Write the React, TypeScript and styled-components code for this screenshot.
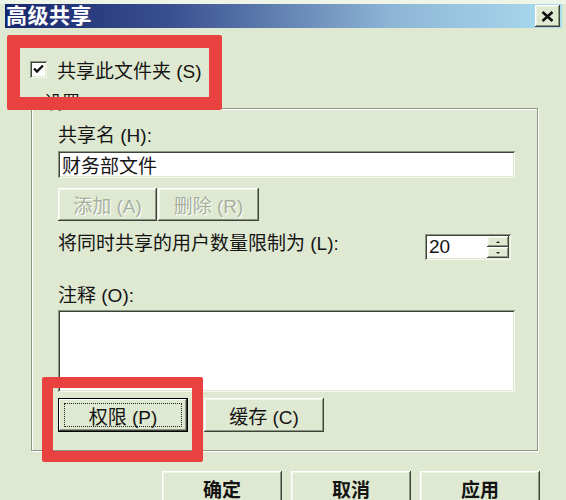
import React from "react";
import styled, { createGlobalStyle, css } from "styled-components";

const GlobalStyle = createGlobalStyle`
  html, body { margin: 0; padding: 0; background: #dfe9d1; }
  body { font-family: "Liberation Sans", "Noto Sans CJK SC", sans-serif; color: #141414; }
  * { box-sizing: border-box; }
`;

const FACE = `"Liberation Sans", "Noto Sans CJK SC", sans-serif`;

const Window = styled.div`
  position: relative;
  width: 566px;
  height: 500px;
  overflow: hidden;
  background: #dfe9d1;
  padding: 4px 4px 0 5px;
  display: flex;
  flex-direction: column;
  box-shadow: inset 0 4px 0 #eef4e6;
`;

const TitleBar = styled.div`
  height: 28px;
  display: flex;
  align-items: center;
  justify-content: space-between;
  padding: 0 2px 0 1px;
  background: linear-gradient(to right, #17266c 0%, #3a5090 30%, #8eb6d6 70%, #aadcee 100%);
`;

const TitleText = styled.span`
  font-family: ${FACE};
  font-weight: 700;
  font-size: 21px;
  line-height: 24px;
  color: #fff;
  letter-spacing: 0.5px;
`;

const raised = css`
  background: #dfe9d1;
  border: none;
  box-shadow:
    inset -1px -1px 0 #3e4438,
    inset 1px 1px 0 #ffffff,
    inset -2px -2px 0 #8c9684,
    inset 2px 2px 0 #eef4e6;
`;

const sunken = css`
  background: #ffffff;
  border: none;
  box-shadow:
    inset 1px 1px 0 #8c9684,
    inset -1px -1px 0 #f4f8ee,
    inset 2px 2px 0 #3e4438,
    inset -2px -2px 0 #dfe9d1;
`;

const CloseButton = styled.div`
  ${raised};
  width: 25px;
  height: 22px;
  display: flex;
  align-items: center;
  justify-content: center;
`;

const Body = styled.div`
  display: flex;
  flex-direction: column;
  padding: 0 24px 0 25px;
`;

const CheckRow = styled.label`
  margin-top: 30px;
  height: 22px;
  display: flex;
  align-items: center;
  gap: 10px;
  font-family: ${FACE};
  font-size: 19px;
`;

const CheckBox = styled.span`
  ${sunken};
  width: 17px;
  height: 17px;
  display: flex;
  align-items: center;
  justify-content: center;
`;

const Group = styled.fieldset`
  margin: 18px 0 0 1px;
  padding: 0 22px 18px 26px;
  border: 1px solid #8c9684;
  box-shadow: inset 1px 1px 0 #ffffff, 1px 1px 0 #ffffff;
  min-width: 0;
  display: flex;
  flex-direction: column;
`;

const Legend = styled.legend`
  margin-left: -17px;
  padding: 0 3px;
  font-family: ${FACE};
  font-size: 18px;
  line-height: 20px;
`;

const LegendText = styled.span`
  display: inline-block;
  transform: translateY(-5px);
`;

const Label = styled.div<{ $top: number }>`
  margin-top: ${(p) => p.$top}px;
  font-family: ${FACE};
  font-size: 19px;
  line-height: 20px;
  white-space: nowrap;
`;

const TextField = styled.div`
  ${sunken};
  margin-top: 5px;
  height: 27px;
  padding: 0 4px;
  display: flex;
  align-items: center;
  font-family: ${FACE};
  font-size: 19px;
`;

const Row = styled.div<{ $top: number; $gap: number }>`
  margin-top: ${(p) => p.$top}px;
  display: flex;
  align-items: center;
  gap: ${(p) => p.$gap}px;
`;

const Button = styled.div<{
  $w: number;
  $h: number;
  $disabled?: boolean;
  $default?: boolean;
  $bold?: boolean;
}>`
  ${raised};
  position: relative;
  width: ${(p) => p.$w}px;
  height: ${(p) => p.$h}px;
  flex: none;
  display: flex;
  align-items: center;
  justify-content: center;
  font-family: ${FACE};
  font-size: 19px;
  font-weight: ${(p) => (p.$bold ? 700 : 400)};
  color: ${(p) => (p.$disabled ? "#a7b09d" : "#141414")};
  text-shadow: ${(p) => (p.$disabled ? "1px 1px 0 #ffffff" : "none")};
  ${(p) =>
    p.$default &&
    css`
      box-shadow:
        inset 0 0 0 1px #000,
        inset -2px -2px 0 #3e4438,
        inset 2px 2px 0 #ffffff,
        inset -3px -3px 0 #8c9684;
    `}
`;

const FocusRing = styled.span`
  position: absolute;
  inset: 5px 6px;
  border: 1px dotted #222;
`;

const LimitRow = styled.div`
  margin-top: 13px;
  height: 26px;
  display: flex;
  align-items: center;
  justify-content: space-between;
  padding-right: 4px;
`;

const LimitLabel = styled.span`
  font-family: ${FACE};
  font-size: 19px;
  line-height: 20px;
  margin-top: -6px;
  white-space: nowrap;
`;

const Spin = styled.div`
  ${sunken};
  width: 86px;
  height: 26px;
  display: flex;
  align-items: stretch;
  padding: 2px;
`;

const SpinValue = styled.span`
  flex: 1;
  padding-left: 2px;
  display: flex;
  align-items: center;
  font-family: ${FACE};
  font-size: 19px;
`;

const SpinButtons = styled.div`
  width: 22px;
  display: flex;
  flex-direction: column;
`;

const SpinButton = styled.div`
  ${raised};
  flex: 1;
  display: flex;
  align-items: center;
  justify-content: center;
`;

const Arrow = styled.span<{ $up?: boolean }>`
  width: 0;
  height: 0;
  border-left: 2px solid transparent;
  border-right: 2px solid transparent;
  ${(p) =>
    p.$up ? "border-bottom: 2px solid #222;" : "border-top: 2px solid #222;"}
`;

const TextArea = styled.div`
  ${sunken};
  margin-top: 4px;
  height: 82px;
`;

const Footer = styled.div`
  margin: 20px -2px 0 0;
  display: flex;
  justify-content: flex-end;
  gap: 9px;
`;

const Callout = styled.div<{ $x: number; $y: number; $w: number; $h: number; $t: number }>`
  position: absolute;
  left: ${(p) => p.$x}px;
  top: ${(p) => p.$y}px;
  width: ${(p) => p.$w}px;
  height: ${(p) => p.$h}px;
  border: ${(p) => p.$t}px solid #e8413f;
  border-radius: 2px;
  pointer-events: none;
`;

export default function App() {
  return (
    <>
      <GlobalStyle />
      <Window>
        <TitleBar>
          <TitleText>高级共享</TitleText>
          <CloseButton>
            <svg width="13" height="11" viewBox="0 0 13 11">
              <path d="M1.5 1 L11.5 10 M11.5 1 L1.5 10" stroke="#111" strokeWidth="2.6" />
            </svg>
          </CloseButton>
        </TitleBar>
        <Body>
          <CheckRow>
            <CheckBox>
              <svg width="11" height="10" viewBox="0 0 11 10">
                <path d="M1 4.5 L4 7.5 L10 1.5" stroke="#111" strokeWidth="2.4" fill="none" />
              </svg>
            </CheckBox>
            共享此文件夹 (S)
          </CheckRow>
          <Group>
            <Legend>
              <LegendText>设置</LegendText>
            </Legend>
            <Label $top={8}>共享名 (H):</Label>
            <TextField>财务部文件</TextField>
            <Row $top={10} $gap={1}>
              <Button $w={99} $h={33} $disabled>
                添加 (A)
              </Button>
              <Button $w={101} $h={33} $disabled>
                删除 (R)
              </Button>
            </Row>
            <LimitRow>
              <LimitLabel>将同时共享的用户数量限制为 (L):</LimitLabel>
              <Spin>
                <SpinValue>20</SpinValue>
                <SpinButtons>
                  <SpinButton>
                    <Arrow $up />
                  </SpinButton>
                  <SpinButton>
                    <Arrow />
                  </SpinButton>
                </SpinButtons>
              </Spin>
            </LimitRow>
            <Label $top={26}>注释 (O):</Label>
            <TextArea />
            <Row $top={6} $gap={16}>
              <Button $w={130} $h={34} $default>
                <FocusRing />
                权限 (P)
              </Button>
              <Button $w={120} $h={34}>
                缓存 (C)
              </Button>
            </Row>
          </Group>
          <Footer>
            <Button $w={120} $h={34} $bold>
              确定
            </Button>
            <Button $w={120} $h={34} $bold>
              取消
            </Button>
            <Button $w={120} $h={34} $bold>
              应用
            </Button>
          </Footer>
        </Body>
        <Callout $x={7} $y={35} $w={215} $h={75} $t={13} />
        <Callout $x={42} $y={377} $w={161} $h={85} $t={11} />
      </Window>
    </>
  );
}
